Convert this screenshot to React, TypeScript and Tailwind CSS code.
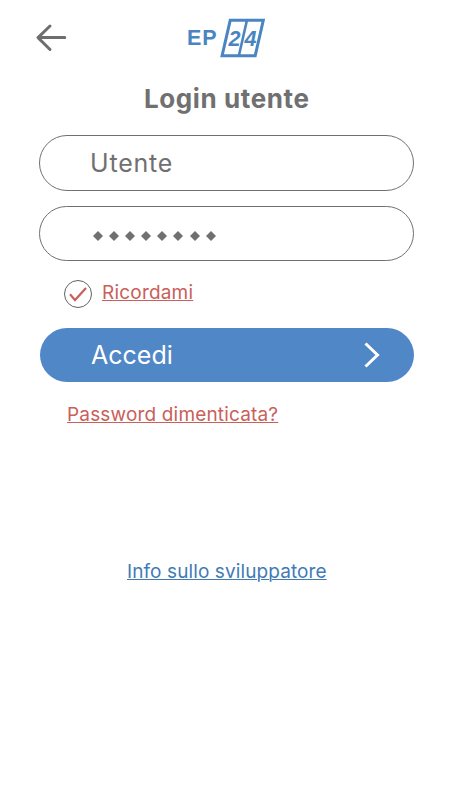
import { useState } from "react";

const PASSWORD_LENGTH = 8;

function BackArrow() {
  return (
    <svg
      width="32"
      height="30"
      viewBox="0 0 32 30"
      fill="none"
      stroke="#6e6e6e"
      strokeWidth="3"
      strokeLinecap="round"
      strokeLinejoin="round"
    >
      <path d="M15 4 3 15.6 15 27.5M3 15.6h26.8" />
    </svg>
  );
}

function Logo() {
  return (
    <div className="flex items-start text-[#4a85c1]">
      <span className="mt-[8px] w-[33px] whitespace-nowrap font-['Liberation_Sans',sans-serif] text-[21.5px] leading-[24px] font-bold tracking-[0.8px]">
        EP
      </span>
      <svg width="46" height="40" viewBox="0 0 46 40" fill="none">
        <path
          d="M10.2 2.3H43.3L35.2 37.7H2.1Z"
          stroke="currentColor"
          strokeWidth="3"
        />
        <path d="M27 2 18.8 38" stroke="currentColor" strokeWidth="2.6" />
        <g
          fill="currentColor"
          fontFamily="Liberation Sans, sans-serif"
          fontSize="22.5"
          fontWeight="700"
          fontStyle="italic"
        >
          <text x="8.4" y="27.8" textLength="12" lengthAdjust="spacingAndGlyphs">
            2
          </text>
          <text x="24.4" y="27.8" textLength="12" lengthAdjust="spacingAndGlyphs">
            4
          </text>
        </g>
      </svg>
    </div>
  );
}

export default function App() {
  const [remember, setRemember] = useState(true);

  return (
    <main className="flex min-h-screen w-[450px] flex-col bg-white font-[Inter,sans-serif] text-[#707070]">
      <header className="flex h-[76px] items-start pl-[35px]">
        <button type="button" aria-label="Indietro" className="mt-[22px]">
          <BackArrow />
        </button>
        <div className="mt-[18px] ml-[120px]">
          <Logo />
        </div>
      </header>

      <h1 className="flex h-[44px] items-center pl-[144px] text-[26px] font-bold tracking-[0.6px] whitespace-nowrap">
        Login utente
      </h1>

      <form
        className="mt-[15px] ml-[39px] flex w-[375px] flex-col"
        onSubmit={(e) => e.preventDefault()}
      >
        <div className="flex h-[56px] items-center rounded-full border border-[#707070] pt-[2px] pl-[50px] text-[25px] tracking-[0.8px]">
          Utente
        </div>

        {/* password nascosta */}
        <div className="mt-[15px] flex h-[55px] items-center gap-[6.1px] rounded-full border border-[#707070] pt-[4px] pl-[53px]">
          {Array.from({ length: PASSWORD_LENGTH }, (_, i) => (
            <svg key={i} width="10" height="10" viewBox="0 0 10 10">
              <path d="M5 0 10 5 5 10 0 5Z" fill="#707070" />
            </svg>
          ))}
        </div>

        <div className="mt-[18px] flex h-[30px] items-start pl-[25px]">
          <button
            type="button"
            aria-label="Ricordami"
            onClick={() => setRemember(!remember)}
            className="mt-[1px] flex size-[28px] items-center justify-center rounded-full border border-[#626262]"
          >
            {remember && (
              <svg
                width="18"
                height="16"
                viewBox="0 0 18 16"
                fill="none"
                stroke="#c9605a"
                strokeWidth="2.2"
              >
                <path d="M1 8.3 6 14 17 2" />
              </svg>
            )}
          </button>
          <span className="ml-[10px] text-[19px] leading-[28px] tracking-[0.2px] text-[#c9605a] underline decoration-1 underline-offset-1">
            Ricordami
          </span>
        </div>

        <button
          type="submit"
          className="mt-[19px] ml-px flex h-[54px] w-[374px] items-center justify-between rounded-full bg-[#5087c7] pr-[33px] pl-[51px] text-[25px] text-white"
        >
          <span className="pt-[2px]">Accedi</span>
          <svg
            width="18"
            height="28"
            viewBox="0 0 18 28"
            fill="none"
            stroke="currentColor"
            strokeWidth="3"
          >
            <path d="M2.5 2.5 14.5 14 2.5 25.5" />
          </svg>
        </button>
      </form>

      <a
        href="#password"
        className="mt-[19px] ml-[67px] self-start text-[19px] leading-[28px] tracking-[0.17px] whitespace-nowrap text-[#c9605a] underline decoration-1 underline-offset-1"
      >
        Password dimenticata?
      </a>
      <a
        href="#info"
        className="mt-[129px] ml-[127px] self-start text-[19px] leading-[28px] tracking-[0.1px] whitespace-nowrap text-[#3f7bb5] underline decoration-1 underline-offset-1"
      >
        Info sullo sviluppatore
      </a>
    </main>
  );
}
